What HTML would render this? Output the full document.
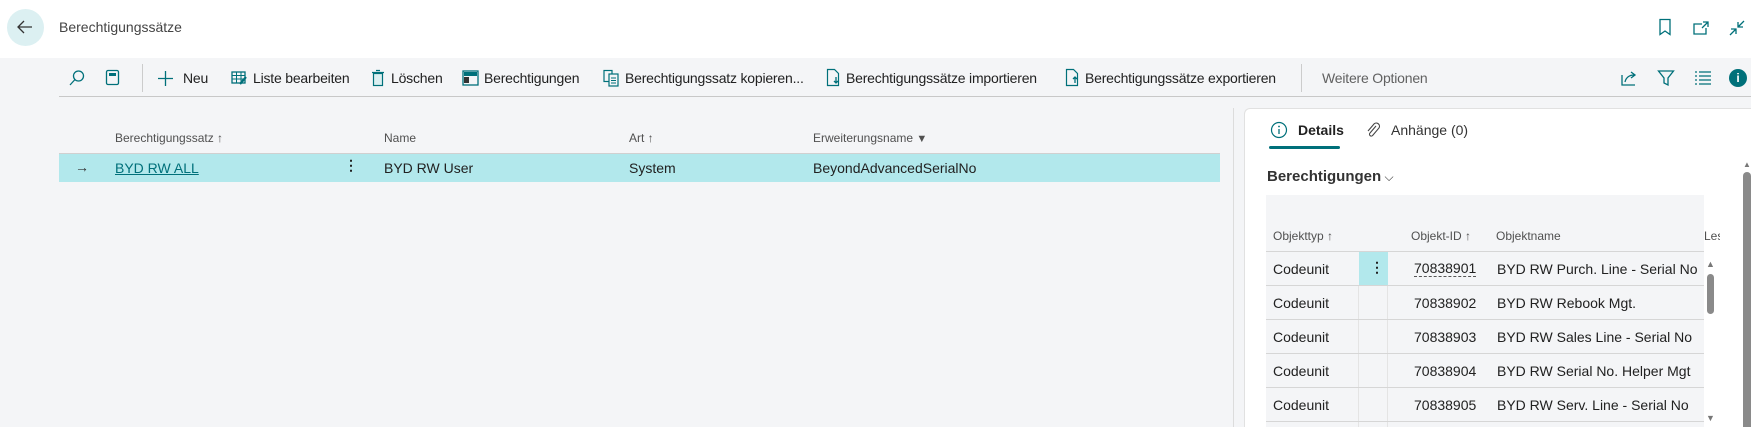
<!DOCTYPE html>
<html style="width:1751px;height:427px;overflow:hidden"><head><meta charset="utf-8"><style>
*{margin:0;padding:0;box-sizing:border-box}
body{width:1751px;height:427px;overflow:hidden;background:#f4f5f7;font-family:"Liberation Sans",sans-serif;color:#212121;position:relative;font-size:14px}
.a{position:absolute;white-space:nowrap}
.hdr{position:absolute;left:0;top:0;width:1751px;height:58px;background:#fff}
.tb{font-size:14px;top:70px;color:#212121;letter-spacing:-0.2px}
.ic{position:absolute}
.th{font-size:12px;color:#505050}
.teal{color:#00707a}
</style></head><body>
<div class="hdr"></div>
<div class="a" style="left:7px;top:9px;width:37px;height:37px;border-radius:50%;background:#dcf0f2"></div>
<svg class="ic" style="left:15px;top:17px" width="20" height="20" viewBox="0 0 20 20"><path d="M17 10H3M9 4L3 10l6 6" stroke="#333" stroke-width="1.3" fill="none"/></svg>
<div class="a" style="left:59px;top:19px;font-size:14px;color:#444">Berechtigungssätze</div>
<svg class="ic" style="left:1657px;top:18px" width="16" height="18" viewBox="0 0 16 18"><path d="M3 1.5h10v15l-5-3.5-5 3.5z" stroke="#00707a" stroke-width="1.3" fill="none"/></svg>
<svg class="ic" style="left:1692px;top:20px" width="18" height="16" viewBox="0 0 18 16"><path d="M10 4H2v10h12V8M11 2h5v5M16 2l-6 6" stroke="#00707a" stroke-width="1.3" fill="none"/></svg>
<svg class="ic" style="left:1728px;top:19px" width="18" height="18" viewBox="0 0 18 18"><path d="M16 2l-6 6M10 3v5h5M2 16l6-6M8 15v-5H3" stroke="#00707a" stroke-width="1.3" fill="none"/></svg>

<svg class="ic" style="left:68px;top:69px" width="18" height="18" viewBox="0 0 18 18"><circle cx="10.5" cy="7" r="5" stroke="#00707a" stroke-width="1.3" fill="none"/><path d="M7 10.5L2 16" stroke="#00707a" stroke-width="1.3"/></svg>
<svg class="ic" style="left:105px;top:69px" width="16" height="18" viewBox="0 0 16 18"><rect x="1.5" y="1.5" width="12" height="14" rx="1.5" stroke="#00707a" stroke-width="1.3" fill="none"/><rect x="4" y="4" width="7" height="3" fill="#00707a"/></svg>
<div class="a" style="left:142px;top:64px;width:1px;height:28px;background:#ccc"></div>
<svg class="ic" style="left:157px;top:70px" width="17" height="17" viewBox="0 0 17 17"><path d="M8.5 1v15M1 8.5h15" stroke="#00707a" stroke-width="1.3"/></svg>
<div class="a tb" style="left:183px">Neu</div>
<svg class="ic" style="left:231px;top:70px" width="17" height="16" viewBox="0 0 17 16"><rect x="1" y="2" width="13" height="11" stroke="#00707a" stroke-width="1.3" fill="none"/><path d="M1 5.5h13M1 9h13M5.5 2v11M10 2v11" stroke="#00707a" stroke-width="1"/><path d="M9 14l6-7" stroke="#00707a" stroke-width="2.2"/></svg>
<div class="a tb" style="left:253px">Liste bearbeiten</div>
<svg class="ic" style="left:371px;top:69px" width="14" height="18" viewBox="0 0 14 18"><path d="M1 3.5h12M5 1.5h4" stroke="#00707a" stroke-width="1.3"/><rect x="2.5" y="4.5" width="9" height="12" stroke="#00707a" stroke-width="1.2" fill="#dbeff1"/></svg>
<div class="a tb" style="left:391px">Löschen</div>
<svg class="ic" style="left:462px;top:69px" width="18" height="18" viewBox="0 0 18 18"><rect x="1" y="2" width="15" height="14" stroke="#00707a" stroke-width="1.3" fill="none"/><rect x="2" y="3" width="13" height="4" fill="#00707a"/><rect x="2" y="8" width="5" height="6" fill="#333"/></svg>
<div class="a tb" style="left:484px">Berechtigungen</div>
<svg class="ic" style="left:603px;top:69px" width="17" height="18" viewBox="0 0 17 18"><rect x="1" y="1.5" width="8" height="11" stroke="#00707a" stroke-width="1.2" fill="none"/><rect x="6" y="5" width="9" height="12" stroke="#00707a" stroke-width="1.2" fill="#f4f5f7"/><path d="M8 9h5M8 11.5h5M8 14h5" stroke="#00707a" stroke-width="1"/></svg>
<div class="a tb" style="left:625px">Berechtigungssatz kopieren...</div>
<svg class="ic" style="left:826px;top:68px" width="15" height="19" viewBox="0 0 15 19"><path d="M1.5 1.5h7l4 4v12h-11z" stroke="#00707a" stroke-width="1.2" fill="none"/><path d="M10 9v6M8 13l2 2 2-2" stroke="#00707a" stroke-width="1.3" fill="none"/></svg>
<div class="a tb" style="left:846px">Berechtigungssätze importieren</div>
<svg class="ic" style="left:1065px;top:68px" width="15" height="19" viewBox="0 0 15 19"><path d="M1.5 1.5h7l4 4v12h-11z" stroke="#00707a" stroke-width="1.2" fill="none"/><path d="M10 15V9M8 11l2-2 2 2" stroke="#00707a" stroke-width="1.3" fill="none"/></svg>
<div class="a tb" style="left:1085px">Berechtigungssätze exportieren</div>
<div class="a" style="left:1301px;top:64px;width:1px;height:28px;background:#ccc"></div>
<div class="a tb" style="left:1322px;color:#616161">Weitere Optionen</div>
<svg class="ic" style="left:1620px;top:69px" width="18" height="18" viewBox="0 0 18 18"><path d="M2 6v10h13" stroke="#00707a" stroke-width="1.3" fill="none"/><path d="M5 13c1-5 5-7 9-7M11 3l4 3-4 3" stroke="#00707a" stroke-width="1.3" fill="none"/></svg>
<svg class="ic" style="left:1657px;top:69px" width="18" height="18" viewBox="0 0 18 18"><path d="M1.5 2h15l-5.5 7v7l-4-2V9z" stroke="#00707a" stroke-width="1.3" fill="none"/></svg>
<svg class="ic" style="left:1694px;top:70px" width="18" height="16" viewBox="0 0 18 16"><path d="M1 2h2M1 6h2M1 10h2M1 14h2M5 2h12M5 6h12M5 10h12M5 14h12" stroke="#00707a" stroke-width="1.2"/></svg>
<div class="a" style="left:1729px;top:69px;width:18px;height:18px;border-radius:50%;background:#00707a;color:#fff;font-size:12px;font-weight:bold;text-align:center;line-height:18px">i</div>
<div class="a" style="left:59px;top:96px;width:1692px;height:1px;background:#c8c8c8"></div>

<div class="a th" style="left:115px;top:131px">Berechtigungssatz ↑</div>
<div class="a th" style="left:384px;top:131px">Name</div>
<div class="a th" style="left:629px;top:131px">Art ↑</div>
<div class="a th" style="left:813px;top:131px">Erweiterungsname <span style="font-size:11px">▼</span></div>
<div class="a" style="left:59px;top:153px;width:1161px;height:29px;background:#b2e8ec;border-top:1px solid #d0d0d0"></div>
<div class="a" style="left:75px;top:159px;color:#333">→</div>
<div class="a teal" style="left:115px;top:160px;text-decoration:underline">BYD RW ALL</div>
<div class="a" style="left:344px;top:157px;font-weight:bold">⋮</div>
<div class="a" style="left:384px;top:160px">BYD RW User</div>
<div class="a" style="left:629px;top:160px">System</div>
<div class="a" style="left:813px;top:160px">BeyondAdvancedSerialNo</div>

<div class="a" style="left:1233px;top:108px;width:1px;height:319px;background:#dcdcdc"></div>
<div class="a" style="left:1244px;top:108px;width:507px;height:319px;background:#fff;border:1px solid #e1e1e1;border-bottom:none;border-right:none;border-radius:6px 0 0 0"></div>
<svg class="ic" style="left:1270px;top:121px" width="18" height="18" viewBox="0 0 18 18"><circle cx="9" cy="9" r="7.5" stroke="#00707a" stroke-width="1.2" fill="none"/><path d="M9 8v5" stroke="#00707a" stroke-width="1.3"/><circle cx="9" cy="5.5" r="0.9" fill="#00707a"/></svg>
<div class="a" style="left:1298px;top:122px;font-weight:bold;font-size:14px">Details</div>
<svg class="ic" style="left:1365px;top:121px" width="16" height="18" viewBox="0 0 16 18"><path d="M11 5l-6 7a1.8 1.8 0 0 0 2.6 2.5l6.2-7.3a3.2 3.2 0 0 0-4.6-4.4L3 10" stroke="#444" stroke-width="1.1" fill="none"/></svg>
<div class="a" style="left:1391px;top:122px;color:#333">Anhänge (0)</div>
<div class="a" style="left:1269px;top:146px;width:71px;height:3px;background:#00707a;border-radius:2px"></div>
<div class="a" style="left:1267px;top:168px;font-size:15px;font-weight:bold;color:#333">Berechtigungen<span style="font-weight:normal;font-size:12px"> ⌵</span></div>

<div class="a" style="left:1266px;top:195px;width:438px;height:232px;background:#f4f5f7"></div>
<div class="a th" style="left:1273px;top:229px">Objekttyp ↑</div>
<div class="a th" style="left:1411px;top:229px">Objekt-ID ↑</div>
<div class="a th" style="left:1496px;top:229px">Objektname</div>
<div class="a th" style="left:1704px;top:229px;width:16px;overflow:hidden">Les</div>
<div class="a" style="left:1266px;top:251px;width:438px;height:1px;background:#d6d6d6"></div>
<div class="a" style="left:1359px;top:252px;width:29px;height:33px;background:#b2e8ec"></div>
<div class="a" style="left:1370px;top:259px;font-weight:bold">⋮</div>
<div class="a" style="left:1358px;top:286px;width:1px;height:141px;background:#e4e4e4"></div>
<div class="a" style="left:1387px;top:286px;width:1px;height:141px;background:#e4e4e4"></div>

<div class="a" style="left:1273px;top:261px">Codeunit</div><div class="a" style="left:1414px;top:261px;border-bottom:1px dashed #555;line-height:15px">70838901</div><div class="a" style="left:1497px;top:261px">BYD RW Purch. Line - Serial No</div>
<div class="a" style="left:1266px;top:285px;width:438px;height:1px;background:#d6d6d6"></div>
<div class="a" style="left:1273px;top:295px">Codeunit</div><div class="a" style="left:1414px;top:295px">70838902</div><div class="a" style="left:1497px;top:295px">BYD RW Rebook Mgt.</div>
<div class="a" style="left:1266px;top:319px;width:438px;height:1px;background:#d6d6d6"></div>
<div class="a" style="left:1273px;top:329px">Codeunit</div><div class="a" style="left:1414px;top:329px">70838903</div><div class="a" style="left:1497px;top:329px">BYD RW Sales Line - Serial No</div>
<div class="a" style="left:1266px;top:353px;width:438px;height:1px;background:#d6d6d6"></div>
<div class="a" style="left:1273px;top:363px">Codeunit</div><div class="a" style="left:1414px;top:363px">70838904</div><div class="a" style="left:1497px;top:363px">BYD RW Serial No. Helper Mgt</div>
<div class="a" style="left:1266px;top:387px;width:438px;height:1px;background:#d6d6d6"></div>
<div class="a" style="left:1273px;top:397px">Codeunit</div><div class="a" style="left:1414px;top:397px">70838905</div><div class="a" style="left:1497px;top:397px">BYD RW Serv. Line - Serial No</div>
<div class="a" style="left:1266px;top:421px;width:438px;height:1px;background:#d6d6d6"></div>

<div class="a" style="left:1706px;top:259px;font-size:9px;color:#777">▲</div>
<div class="a" style="left:1707px;top:274px;width:7px;height:40px;border-radius:4px;background:#8a8a8a"></div>
<div class="a" style="left:1706px;top:413px;font-size:9px;color:#777">▼</div>
<div class="a" style="left:1743px;top:172px;width:8px;height:255px;border-radius:4px 4px 0 0;background:#8a8a8a"></div>
<div class="a" style="left:1743px;top:160px;font-size:8px;color:#777">▲</div>
</body></html>
